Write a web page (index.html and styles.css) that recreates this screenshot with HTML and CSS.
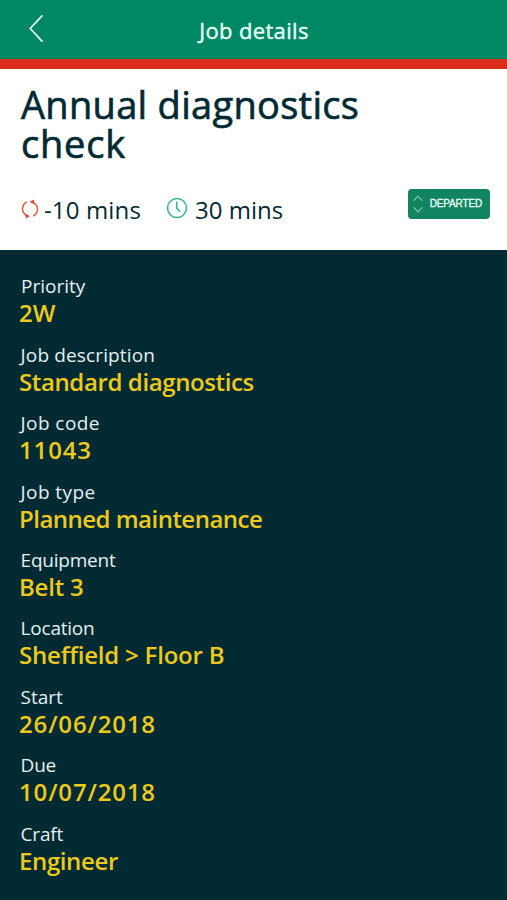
FILE: index.html
```html
<!DOCTYPE html>
<html lang="en">
<head>
<meta charset="utf-8">
<title>Job details</title>
<link rel="stylesheet" href="styles.css">
</head>
<body>
<header class="bar">
  <svg class="back" viewBox="0 0 14 27"><path d="M13 .8 1.2 13.5 13 26.2"/></svg>
  <h1 class="bar-title">Job details</h1>
</header>
<section class="summary">
  <h2 class="title"><span class="title-first">Annual diagnostics</span><br><span class="title-second">check</span></h2>
  <div class="meta">
    <svg class="cycle" viewBox="0 0 18 20"><path d="M5.2 3.2A7.7 7.7 0 0 0 4.8 16M12.8 16.8A7.7 7.7 0 0 0 13 3.8"/><path class="tip" d="M8.6 2.8 13 .6 13 5.2zM9 17.2 4.6 19.4 4.8 14.8z"/></svg>
    <span class="time time-delta">-10 mins</span>
    <svg class="clock" viewBox="0 0 22 22"><circle cx="11" cy="11" r="9.5"/><path d="M10.8 5v6.4l2.8 2.8"/></svg>
    <span class="time time-total">30 mins</span>
    <button class="status">
      <svg class="sort" viewBox="0 0 10 18"><path d="M1 5.3 5 1.2 9 5.3M1 12.7 5 16.8 9 12.7"/></svg>
      <span class="status-text">DEPARTED</span>
    </button>
  </div>
</section>
<dl class="details">
  <div class="row"><dt class="shifted">Priority</dt><dd>2W</dd></div>
  <div class="row"><dt class="open">Job description</dt><dd class="snug">Standard diagnostics</dd></div>
  <div class="row"><dt class="wide">Job code</dt><dd class="numeric">11043</dd></div>
  <div class="row"><dt class="wide">Job type</dt><dd class="tight">Planned maintenance</dd></div>
  <div class="row"><dt class="close">Equipment</dt><dd class="near">Belt 3</dd></div>
  <div class="row"><dt class="close">Location</dt><dd class="near">Sheffield &gt; Floor B</dd></div>
  <div class="row"><dt>Start</dt><dd class="numeric">26/06/2018</dd></div>
  <div class="row"><dt class="close">Due</dt><dd class="numeric">10/07/2018</dd></div>
  <div class="row"><dt class="close">Craft</dt><dd class="snug">Engineer</dd></div>
</dl>
</body>
</html>
```

FILE: styles.css
```css
* { box-sizing: border-box; }
body {
  margin: 0;
  height: 900px;
  overflow: hidden;
  display: flex;
  flex-direction: column;
  background: #022a33;
  color: #022a33;
  font-family: "Open Sans", "Noto Sans", sans-serif;
  font-variant-ligatures: none;
}
svg { display: block; fill: none; flex: none; stroke-linecap: round; stroke-linejoin: round; }
.bar {
  height: 69px;
  flex: none;
  display: grid;
  grid-template-columns: 1fr auto 1fr;
  background: #008764;
  border-bottom: 10px solid #d92c1b;
}
.back { width: 14px; height: 27px; margin: 15px 0 0 29px; stroke: #e8fff6; stroke-width: 1.7; }
.bar-title {
  margin: 14px 0 0 1px;
  font-size: 22px;
  line-height: 32px;
  font-weight: 400;
  letter-spacing: .35px;
  -webkit-text-stroke: .4px #e4fff6;
  color: #e4fff6;
}
.summary { height: 181px; flex: none; background: #fff; padding: 16px 17px 0 21px; }
.title {
  margin: 0;
  font-size: 38px;
  line-height: 39px;
  font-weight: 400;
  white-space: nowrap;
  -webkit-text-stroke: .65px #022a33;
}
.title-first { letter-spacing: .3px; }
.title-second { letter-spacing: .8px; }
.meta { display: flex; margin-top: 24px; height: 60px; }
.cycle { width: 18px; height: 20px; margin-top: 12px; stroke: #e0624f; stroke-width: 1.6; }
.tip { fill: #dd4a38; stroke: none; }
.clock { width: 22px; height: 22px; margin: 10px 0 0 25px; stroke: #3dba8f; stroke-width: 1.6; }
.time { font-size: 24px; line-height: 32px; margin-top: 7px; white-space: nowrap; }
.time-delta { width: 97px; margin-left: 5px; letter-spacing: .15px; }
.time-total { margin-left: 7px; }
.status {
  width: 82px;
  height: 30px;
  margin: 2px 0 0 auto;
  padding: 0 8px 0 5px;
  display: flex;
  align-items: center;
  justify-content: space-between;
  border: 0;
  border-radius: 4px;
  background: #118562;
  color: #eafff7;
  font: 400 10px/14px "Liberation Sans", sans-serif;
}
.status-text { letter-spacing: -.15px; -webkit-text-stroke: .3px #eafff7; }
.sort { width: 10px; height: 18px; stroke: #83cdb2; stroke-width: 1.1; }
.details { margin: 0; padding: 23.4px 0 0 20px; }
.row { height: 68.4px; white-space: nowrap; }
dt { margin-left: .6px; font-size: 19px; line-height: 26px; color: #e3f0f2; }
dd { margin: 0 0 0 -1px; font-size: 24px; line-height: 28px; font-weight: 600; color: #ecc91b; }
.shifted { margin-left: 1px; }
.open { letter-spacing: .14px; }
.wide { letter-spacing: .42px; }
.close { letter-spacing: -.22px; }
.snug { letter-spacing: -.38px; }
.tight { letter-spacing: -.52px; }
.near { letter-spacing: -.2px; }
.numeric { letter-spacing: .84px; }
```
